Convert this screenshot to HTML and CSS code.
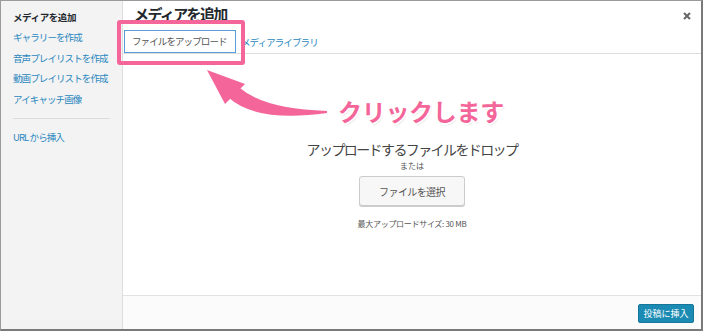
FILE: index.html
```html
<!DOCTYPE html>
<html lang="ja">

<head>
    <meta charset="UTF-8">
    <title>メディアを追加</title>
    <link rel="stylesheet" href="styles.css">
</head>

<body>

    <div class="frame">
        <div class="sidebar">
            <div class="menu-title">メディアを追加</div>
            <a class="menu-item">ギャラリーを作成</a>
            <a class="menu-item">音声プレイリストを作成</a>
            <a class="menu-item">動画プレイリストを作成</a>
            <a class="menu-item">アイキャッチ画像</a>
            <div class="separator"></div>
            <a class="menu-item">URL から挿入</a>
        </div>

        <div class="main">
            <div class="header">
                <h1>メディアを追加</h1>
                <svg class="close" width="8" height="8" viewBox="0 0 8 8">
                    <path d="M1 1L7 7M7 1L1 7" stroke="#666" stroke-width="2" />
                </svg>
                <div class="tabs">
                    <span class="tab active">ファイルをアップロード</span>
                    <span class="tab">メディアライブラリ</span>
                </div>
            </div>

            <div class="content">
                <div class="drop-title">アップロードするファイルをドロップ</div>
                <div class="or">または</div>
                <button class="select-btn">ファイルを選択</button>
                <div class="max-size">最大アップロードサイズ: 30 MB</div>
            </div>

            <div class="footer">
                <button class="insert-btn">投稿に挿入</button>
            </div>
        </div>

        <!-- annotation -->
        <div class="highlight"></div>
        <svg class="arrow" width="703" height="331" viewBox="0 0 703 331">
            <path d="M207 70 L225 104 L245 84 Z" fill="#f4669a" />
            <path d="M240 88 Q264 109 327 111 L327 113 Q256 123 228 97 Z" fill="#f4669a" />
        </svg>
        <div class="callout">クリックします</div>
    </div>

</body>

</html>
```

FILE: styles.css
```css
body {
    margin: 0;
    font-family: "Noto Sans CJK JP", "Noto Sans", sans-serif;
}

.frame {
    position: relative;
    display: flex;
    width: 703px;
    height: 331px;
    box-sizing: border-box;
    border: 1px solid #9a9a9a;
    border-right: 2px solid #7a7a7a;
    border-bottom: 2px solid #7a7a7a;
    background: white;
}

.sidebar {
    width: 122px;
    background: #f3f3f3;
    border-right: 1px solid #dddddd;
    padding: 6px 0 0 12px;
    box-sizing: border-box;
    display: flex;
    flex-direction: column;
    flex-shrink: 0;
}

.menu-title {
    font-size: 9.5px;
    font-weight: bold;
    color: #23282d;
    line-height: 20px;
    letter-spacing: -0.4px;
}

.menu-item {
    font-size: 9.5px;
    color: #2a87bf;
    line-height: 20.7px;
    letter-spacing: -0.9px;
    white-space: nowrap;
}

.separator {
    height: 1px;
    background: #dcdcdc;
    margin: 8px 12px 8px 0;
}

.main {
    position: relative;
    flex: 1;
    display: flex;
    flex-direction: column;
}

.header {
    height: 52px;
    border-bottom: 1px solid #dddddd;
}

h1 {
    margin: 0;
    padding-left: 11px;
    height: 28px;
    font-size: 15px;
    line-height: 26px;
    font-weight: bold;
    color: #23282d;
    letter-spacing: -1.6px;
}

.close {
    position: absolute;
    top: 11px;
    right: 10px;
}

.tabs {
    display: flex;
    align-items: flex-end;
    height: 24px;
    padding-left: 1px;
}

.tab {
    font-size: 9.5px;
    line-height: 21px;
    color: #2a87bf;
    padding: 0 6px 0 5px;
    letter-spacing: -0.9px;
}

.tab.active {
    color: #555555;
    border: 1px solid #5b9dd9;
    padding: 0 7px;
    width: 96px;
    background: white;
}

.content {
    flex: 1;
    display: flex;
    flex-direction: column;
    align-items: center;
    padding-top: 86px;
}

.drop-title {
    font-size: 14px;
    line-height: 18px;
    color: #444;
    letter-spacing: -1.6px;
}

.or {
    font-size: 8px;
    color: #555;
    line-height: 12px;
    margin-top: 2px;
}

.select-btn {
    margin-top: 4px;
    width: 106px;
    height: 30px;
    background: #f7f7f7;
    border: 1px solid #cccccc;
    border-radius: 3px;
    box-shadow: 0 1px 0 #cccccc;
    font-family: inherit;
    font-size: 10px;
    color: #555;
    letter-spacing: -0.6px;
}

.max-size {
    margin-top: 12px;
    font-size: 8px;
    color: #555;
    letter-spacing: -0.3px;
}

.footer {
    height: 33px;
    border-top: 1px solid #e2e2e2;
    background: #fbfbfb;
    display: flex;
    justify-content: flex-end;
    align-items: center;
    padding-right: 7px;
}

.insert-btn {
    width: 56px;
    height: 19px;
    background: #1b8bb4;
    border: 1px solid #16769a;
    border-radius: 2px;
    color: white;
    font-family: inherit;
    font-size: 9px;
    padding: 0;
    margin-top: 2px;
}

.highlight {
    position: absolute;
    left: 116px;
    top: 19px;
    width: 120px;
    height: 37px;
    border: 4px solid #f4669a;
    border-radius: 3px;
}

.arrow {
    position: absolute;
    left: -1px;
    top: -1px;
    pointer-events: none;
}

.callout {
    position: absolute;
    left: 337px;
    top: 92px;
    font-size: 24px;
    font-weight: bold;
    color: #f4669a;
    letter-spacing: -0.3px;
    text-shadow: 2px 0 0 #fff, -2px 0 0 #fff, 0 2px 0 #fff, 0 -2px 0 #fff,
        1px 1px 0 #fff, -1px -1px 0 #fff, 1px -1px 0 #fff, -1px 1px 0 #fff,
        1px 2px 2px rgba(0, 0, 0, 0.15);
}
```
